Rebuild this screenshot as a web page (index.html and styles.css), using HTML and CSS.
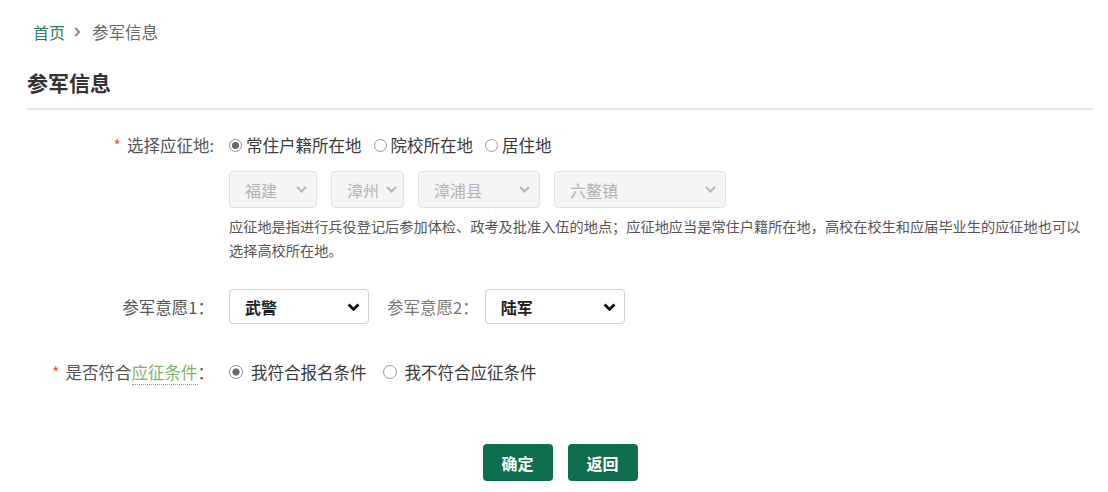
FILE: index.html
```html
<!DOCTYPE html>
<html lang="zh-CN">
<head>
<meta charset="utf-8">
<title>参军信息</title>
<link rel="stylesheet" href="styles.css">
</head>
<body>
<div class="page">
  <nav class="crumb">
    <a class="crumb-home" href="#">首页</a>
    <svg class="crumb-sep" width="7" height="10" viewBox="0 0 7 10"><path d="M1.2 1 L5.2 5 L1.2 9" fill="none" stroke="#6f9383" stroke-width="1.8"/></svg>
    <span class="crumb-cur">参军信息</span>
  </nav>
  <h2 class="title">参军信息</h2>
  <form class="form">
    <div class="row row-place">
      <div class="label"><i class="req">*</i>选择应征地:</div>
      <div class="field radios">
        <label class="radio"><input type="radio" name="place" checked><span>常住户籍所在地</span></label>
        <label class="radio"><input type="radio" name="place"><span>院校所在地</span></label>
        <label class="radio"><input type="radio" name="place"><span>居住地</span></label>
      </div>
    </div>
    <div class="row row-area">
      <div class="label"></div>
      <div class="field">
        <div class="selects">
          <select class="sel dis w88" disabled><option>福建</option></select>
          <select class="sel dis w73" disabled><option>漳州</option></select>
          <select class="sel dis w122" disabled><option>漳浦县</option></select>
          <select class="sel dis w172" disabled><option>六鳌镇</option></select>
        </div>
        <p class="help">应征地是指进行兵役登记后参加体检、政考及批准入伍的地点；应征地应当是常住户籍所在地，高校在校生和应届毕业生的应征地也可以选择高校所在地。</p>
      </div>
    </div>
    <div class="row row-wish">
      <div class="label">参军意愿1：</div>
      <div class="field wish">
        <select class="sel act"><option>武警</option></select>
        <span class="label2">参军意愿2：</span>
        <select class="sel act"><option>陆军</option></select>
      </div>
    </div>
    <div class="row row-cond">
      <div class="label"><i class="req">*</i>是否符合<a class="cond-link" href="#">应征条件</a>：</div>
      <div class="field radios radios-lg">
        <label class="radio"><input type="radio" name="cond" checked><span>我符合报名条件</span></label>
        <label class="radio"><input type="radio" name="cond"><span>我不符合应征条件</span></label>
      </div>
    </div>
    <div class="actions">
      <button type="button" class="btn">确定</button>
      <button type="button" class="btn">返回</button>
    </div>
  </form>
</div>
</body>
</html>
```
FILE: styles.css
```css
* { box-sizing: border-box; }
html, body { margin: 0; padding: 0; background: #fff; }
body {
  font-family: "Noto Sans CJK SC", "Noto Sans", sans-serif;
  color: #333;
}
.page { padding: 20px 15px 0 27px; }

.crumb {
  display: flex;
  align-items: center;
  height: 24px;
  padding-left: 6px;
  font-size: 16px;
  line-height: 24px;
}
.crumb-home { color: #2e7b5a; text-decoration: none; }
.crumb-sep { margin: 0 11px 0 9px; }
.crumb-cur { color: #666; font-size: 16.5px; }

.title {
  margin: 24px 0 0 0;
  font-size: 21px;
  line-height: 28px;
  font-weight: bold;
  color: #333;
  padding-bottom: 12px;
  border-bottom: 2px solid #e3e3e3;
}

.form { margin: 0; }
.row { display: flex; align-items: flex-start; }
.label {
  width: 187px;
  flex: none;
  text-align: right;
  margin-right: 15px;
  color: #555;
  font-size: 16.5px;
  line-height: 24px;
  white-space: nowrap;
}
.req {
  font-style: normal;
  color: #ee5a3e;
  font-size: 16px;
  margin-right: 6px;
}
.field { flex: 1; min-width: 0; }

.row-place { margin-top: 23px; }
.radios { display: flex; align-items: center; height: 24px; font-size: 16.5px; color: #3a3a3a; }
.radio { display: flex; align-items: center; margin-right: 12px; }
.radio span { margin-left: 4px; line-height: 24px; }
.radio input {
  appearance: none;
  -webkit-appearance: none;
  width: 13px;
  height: 13px;
  margin: 0;
  border: 1px solid #9a9a9a;
  border-radius: 50%;
  background: #fff;
}
.radio input:checked {
  border-color: #8a8a8a;
  background: radial-gradient(circle, #6a6a6a 0 3.3px, #fff 3.9px);
}
.radios-lg .radio { margin-right: 16px; }
.radios-lg .radio span { margin-left: 8px; }
.radios-lg .radio input { width: 14px; height: 14px; }

.row-area { margin-top: 14px; }
.selects { display: flex; gap: 14px; }
.sel {
  appearance: none;
  -webkit-appearance: none;
  font-family: inherit;
  font-size: 16px;
  border-radius: 4px;
  padding: 0 0 0 15px;
  margin: 0;
  background-repeat: no-repeat;
}
.sel.dis {
  height: 37px;
  color: #b3b3b3;
  background-color: #f5f5f5;
  border: 1px solid #e0e0e0;
  background-image: url("data:image/svg+xml,%3Csvg xmlns='http://www.w3.org/2000/svg' width='11' height='7' viewBox='0 0 11 7'%3E%3Cpath d='M1 1 L5.5 5.5 L10 1' fill='none' stroke='%23b8b8b8' stroke-width='2'/%3E%3C/svg%3E");
  background-position: right 9px center;
  opacity: 1;
}
.w88 { width: 88px; }
.w73 { width: 73px; background-position: right 6px center !important; }
.w122 { width: 122px; }
.w172 { width: 172px; }
.help {
  margin: 6px 0 0;
  font-size: 14.2px;
  line-height: 24px;
  color: #555;
  max-width: 864px;
}

.row-wish { margin-top: 27px; align-items: center; }
.wish { display: flex; align-items: center; }
.sel.act {
  width: 140px;
  height: 35px;
  color: #222;
  font-weight: bold;
  background-color: #fff;
  border: 1px solid #d2d2d2;
  background-image: url("data:image/svg+xml,%3Csvg xmlns='http://www.w3.org/2000/svg' width='13' height='8' viewBox='0 0 13 8'%3E%3Cpath d='M1.5 1.5 L6.5 6.3 L11.5 1.5' fill='none' stroke='%23111' stroke-width='2.8'/%3E%3C/svg%3E");
  background-position: right 8px center;
}
.label2 { margin: 0 6px 0 18px; font-size: 16.5px; color: #777; line-height: 24px; }

.row-cond { margin-top: 36px; }
.cond-link {
  color: #7db56a;
  text-decoration: none;
  border-bottom: 1px dotted #999;
}

.actions {
  display: flex;
  justify-content: center;
  gap: 15px;
  margin-top: 60px;
}
.btn {
  width: 70px;
  height: 37px;
  border: none;
  border-radius: 4px;
  background: #0e6f50;
  color: #fff;
  font-family: inherit;
  font-size: 16px;
  font-weight: bold;
  padding: 0;
}
```
